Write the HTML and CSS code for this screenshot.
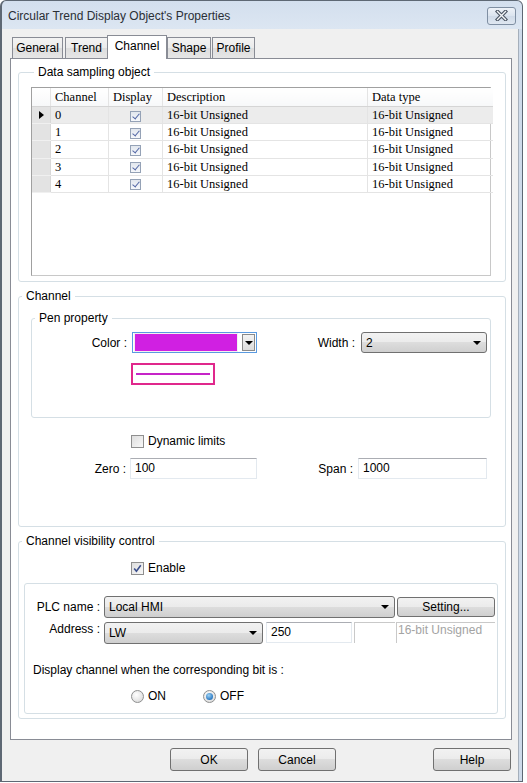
FILE: index.html
```html
<!DOCTYPE html>
<html lang="en">
<head>
    <meta charset="UTF-8">
    <meta name="viewport" content="width=device-width, initial-scale=1.0">
    <title>Circular Trend Display Object's Properties</title>
    <link rel="stylesheet" href="styles.css">
</head>
<body>
    <div class="window">
        <div class="titlebar">
            <span class="title">Circular Trend Display Object's Properties</span>
            <button class="close-btn" type="button">
                <svg width="13" height="11" viewBox="0 0 13 11">
                    <path d="M2.5 1.5 L10.5 9.5 M10.5 1.5 L2.5 9.5" stroke="#4b5563" stroke-width="3.6" stroke-linecap="square"/>
                    <path d="M2.5 1.5 L10.5 9.5 M10.5 1.5 L2.5 9.5" stroke="#f4f6f9" stroke-width="1.4" stroke-linecap="square"/>
                </svg>
            </button>
        </div>

        <div class="client">
            <div class="tabs">
                <div class="tab tab-general">General</div>
                <div class="tab tab-trend">Trend</div>
                <div class="tab tab-channel active">Channel</div>
                <div class="tab tab-shape">Shape</div>
                <div class="tab tab-profile">Profile</div>
            </div>

            <div class="panel">
                <fieldset class="group group-sampling">
                    <legend>Data sampling object</legend>
                    <div class="grid">
                        <table>
                            <thead>
                                <tr>
                                    <th class="rowhead"></th>
                                    <th class="col-channel">Channel</th>
                                    <th class="col-display">Display</th>
                                    <th class="col-desc">Description</th>
                                    <th class="col-type">Data type</th>
                                </tr>
                            </thead>
                            <tbody>
                                <tr class="selected">
                                    <td class="rowhead"><span class="pointer"></span></td>
                                    <td>0</td>
                                    <td class="center"><span class="cell-check"></span></td>
                                    <td>16-bit Unsigned</td>
                                    <td>16-bit Unsigned</td>
                                </tr>
                                <tr>
                                    <td class="rowhead"></td>
                                    <td>1</td>
                                    <td class="center"><span class="cell-check"></span></td>
                                    <td>16-bit Unsigned</td>
                                    <td>16-bit Unsigned</td>
                                </tr>
                                <tr>
                                    <td class="rowhead"></td>
                                    <td>2</td>
                                    <td class="center"><span class="cell-check"></span></td>
                                    <td>16-bit Unsigned</td>
                                    <td>16-bit Unsigned</td>
                                </tr>
                                <tr>
                                    <td class="rowhead"></td>
                                    <td>3</td>
                                    <td class="center"><span class="cell-check"></span></td>
                                    <td>16-bit Unsigned</td>
                                    <td>16-bit Unsigned</td>
                                </tr>
                                <tr>
                                    <td class="rowhead"></td>
                                    <td>4</td>
                                    <td class="center"><span class="cell-check"></span></td>
                                    <td>16-bit Unsigned</td>
                                    <td>16-bit Unsigned</td>
                                </tr>
                            </tbody>
                        </table>
                    </div>
                </fieldset>

                <fieldset class="group group-channel">
                    <legend>Channel</legend>
                    <fieldset class="group group-pen">
                        <legend>Pen property</legend>
                        <div class="row pen-row">
                            <span class="lbl lbl-color">Color :</span>
                            <div class="color-combo">
                                <span class="swatch"></span>
                                <span class="drop-btn"><span class="arrow"></span></span>
                            </div>
                            <span class="lbl lbl-width">Width :</span>
                            <div class="combo combo-width">
                                <span class="combo-text">2</span>
                                <span class="arrow"></span>
                            </div>
                        </div>
                        <div class="preview"><span class="preview-line"></span></div>
                    </fieldset>

                    <div class="check-row dyn-row">
                        <span class="chk"></span>
                        <span>Dynamic limits</span>
                    </div>

                    <div class="row limits-row">
                        <span class="lbl lbl-zero">Zero :</span>
                        <div class="textbox tb-zero">100</div>
                        <span class="lbl lbl-span">Span :</span>
                        <div class="textbox tb-span">1000</div>
                    </div>
                </fieldset>

                <fieldset class="group group-visibility">
                    <legend>Channel visibility control</legend>
                    <div class="check-row enable-row">
                        <span class="chk checked">
                            <svg width="9" height="9" viewBox="0 0 9 9"><path d="M1.2 4.6 L3.4 7.2 L7.8 1.2" fill="none" stroke="#3b4f8c" stroke-width="1.6"/></svg>
                        </span>
                        <span>Enable</span>
                    </div>

                    <div class="inner-box">
                        <div class="row plc-row">
                            <span class="lbl lbl-plc">PLC name :</span>
                            <div class="combo combo-plc">
                                <span class="combo-text">Local HMI</span>
                                <span class="arrow"></span>
                            </div>
                            <button class="btn btn-setting" type="button">Setting...</button>
                        </div>
                        <div class="row addr-row">
                            <span class="lbl lbl-plc">Address :</span>
                            <div class="combo combo-addr">
                                <span class="combo-text">LW</span>
                                <span class="arrow"></span>
                            </div>
                            <div class="textbox tb-addr">250</div>
                            <div class="stub"></div>
                            <div class="stub type-box">16-bit Unsigned</div>
                        </div>
                        <p class="bit-text">Display channel when the corresponding bit is :</p>
                        <div class="radio-row">
                            <span class="radio"></span>
                            <span class="radio-label">ON</span>
                            <span class="radio checked"><span class="dot"></span></span>
                            <span class="radio-label">OFF</span>
                        </div>
                    </div>
                </fieldset>
            </div>

            <div class="buttons">
                <button class="btn btn-ok" type="button">OK</button>
                <button class="btn btn-cancel" type="button">Cancel</button>
                <button class="btn btn-help" type="button">Help</button>
            </div>
        </div>
    </div>
</body>
</html>
```

FILE: styles.css
```css
body {
    margin: 0;
    background-color: #ffffff;
    font-family: "Liberation Sans", Arial, sans-serif;
    font-size: 12px;
    color: #000;
}

.window {
    width: 523px;
    height: 782px;
    box-sizing: border-box;
    border: 1px solid #5e6874;
    border-left-width: 2px;
    border-radius: 6px 6px 0 0;
    background: linear-gradient(#d3dfee, #dce6f2 28px, #cfdbea 28px);
    display: flex;
    flex-direction: column;
}

.titlebar {
    height: 28px;
    display: flex;
    align-items: center;
    justify-content: space-between;
    padding: 0 6px 0 6px;
}
.title {
    color: #2a2f36;
    font-size: 12px;
    margin-top: 1px;
}
.close-btn {
    width: 29px;
    height: 18px;
    margin-top: 1px;
    padding: 0;
    border: 1px solid #7f8fa3;
    border-radius: 3px;
    background: linear-gradient(#eef2f8, #dbe4ef 50%, #cfdae8 50%, #dfe7f1);
    display: flex;
    align-items: center;
    justify-content: center;
}

.client {
    flex: 1;
    background-color: #f0f0f0;
    margin-right: 3px;
    border-right: 1px solid #a5afbb;
    padding: 6px 0 0 8px;
}

/* tabs */
.tabs {
    display: flex;
    align-items: flex-end;
    height: 23px;
    padding-left: 2px;
}
.tab {
    height: 21px;
    box-sizing: border-box;
    border: 1px solid #898c95;
    border-bottom: none;
    background: linear-gradient(#f3f3f3, #ebebeb 50%, #dddddd 50%, #e6e6e6);
    text-align: center;
    line-height: 21px;
    color: #000;
}
.tab-general { width: 51px; margin-right: 2px; }
.tab-trend { width: 43px; }
.tab-shape { width: 44px; }
.tab-profile { width: 43px; margin-left: 1px; }
.tab.active {
    width: 60px;
    height: 24px;
    line-height: 20px;
    background: #ffffff;
    margin-bottom: -1px;
    margin-left: -1px;
    position: relative;
    z-index: 1;
}

.panel {
    width: 502px;
    height: 682px;
    box-sizing: border-box;
    border: 1px solid #898c95;
    background-color: #ffffff;
    padding: 0 5px 0 7px;
}

/* group boxes */
.group {
    margin: 0;
    padding: 0;
    min-width: 0;
    border: 1px solid #d5dfe5;
    border-radius: 3px;
}
.group legend {
    margin-left: 3px;
    padding: 0 4px;
    line-height: 14px;
    color: #000;
}

.group-sampling {
    margin-top: 6px;
    padding: 8px 0 5px 12px;
}
.grid {
    width: 460px;
    height: 189px;
    box-sizing: border-box;
    border: 1px solid #a0a0a0;
    border-right-color: #c8c8c8;
    border-bottom-color: #c8c8c8;
    background-color: #fff;
}
table {
    width: 457px;
    border-collapse: collapse;
    table-layout: fixed;
    font-family: "Liberation Serif", "Times New Roman", serif;
    font-size: 12.5px;
}
th, td {
    padding: 0 0 0 4px;
    text-align: left;
    font-weight: normal;
    white-space: nowrap;
    border-right: 1px solid #e4e4e4;
    border-bottom: 1px solid #e4e4e4;
}
th {
    height: 18px;
    background: linear-gradient(#ffffff, #f7f8f9);
    border-bottom-color: #d5d5d5;
}
td {
    height: 16.2px;
    line-height: 16px;
}
th.rowhead, td.rowhead {
    width: 18px;
    padding: 0;
}
td.rowhead {
    background-color: #e3e3e3;
    border-bottom-color: #f0f0f0;
    border-right-color: #d8d8d8;
}
.col-channel { width: 53px; }
.col-display { width: 49px; }
.col-desc { width: 200px; }
.col-type { width: 121px; border-right: none; }
td:last-child { border-right: none; }
tr.selected td { background-color: #ececec; }
tr.selected td.rowhead { background-color: #e3e3e3; }
td.center {
    text-align: center;
    padding: 0;
}
.pointer {
    display: block;
    width: 0;
    height: 0;
    margin-left: 7px;
    border-top: 4px solid transparent;
    border-bottom: 4px solid transparent;
    border-left: 5px solid #000;
}
.cell-check {
    display: inline-block;
    vertical-align: middle;
    width: 11px;
    height: 11px;
    box-sizing: border-box;
    border: 1px solid #95a2b6;
    background: linear-gradient(#e2e7ee, #f6f8fb);
    position: relative;
}
.cell-check::after {
    content: "";
    position: absolute;
    left: 3px;
    top: 0;
    width: 3px;
    height: 6px;
    border-right: 1.5px solid #5468a6;
    border-bottom: 1.5px solid #5468a6;
    transform: rotate(40deg);
}

/* channel group */
.group-channel {
    margin-top: 7px;
    padding: 8px 0 47px 0;
}
.group-pen {
    margin-left: 12px;
    width: 460px;
    box-sizing: border-box;
    padding: 7px 0 32px 0;
}
.row {
    display: flex;
    align-items: center;
}
.lbl {
    text-align: right;
    flex: none;
}
.lbl-color { width: 95px; margin-right: 5px; }
.lbl-width { width: 98px; margin-right: 6px; }
.pen-row { height: 21px; }

.color-combo {
    width: 125px;
    height: 21px;
    box-sizing: border-box;
    border: 1px solid #5a9ae0;
    display: flex;
    align-items: center;
    padding: 1px;
    background: #fff;
}
.swatch {
    width: 102px;
    height: 17px;
    background-color: #d020e2;
    border: 1px solid #f2f2f2;
}
.drop-btn {
    width: 13px;
    height: 17px;
    margin-left: 4px;
    box-sizing: border-box;
    border: 1px solid #8a8a8a;
    background: linear-gradient(#f4f4f4, #dcdcdc);
    display: flex;
    align-items: center;
    justify-content: center;
}
.arrow {
    width: 0;
    height: 0;
    border-left: 4px solid transparent;
    border-right: 4px solid transparent;
    border-top: 4px solid #000;
}

.combo {
    height: 22px;
    box-sizing: border-box;
    border: 1px solid #707070;
    border-radius: 3px;
    background: linear-gradient(#f2f2f2, #ebebeb 50%, #dddddd 50%, #cfcfcf);
    display: flex;
    align-items: center;
    justify-content: space-between;
    padding: 0 5px 0 4px;
}
.combo-width { width: 126px; height: 21px; }
.combo-text { line-height: 14px; }

.preview {
    width: 84px;
    height: 22px;
    box-sizing: border-box;
    margin: 10px 0 0 99px;
    border: 2px solid #e0288c;
    padding: 0 3px;
    display: flex;
    align-items: center;
}
.preview-line {
    flex: 1;
    height: 2px;
    background-color: #c624c8;
}

.check-row {
    display: flex;
    align-items: center;
    height: 14px;
    margin-left: 112px;
}
.chk {
    width: 13px;
    height: 13px;
    box-sizing: border-box;
    border: 1px solid #8f8f8f;
    background: linear-gradient(135deg, #dedede, #f8f8f8);
    margin-right: 4px;
    display: flex;
    align-items: center;
    justify-content: center;
}
.dyn-row { margin-top: 16px; }
.enable-row { margin-top: 13px; }

.limits-row { margin-top: 10px; }
.lbl-zero { width: 107px; margin-right: 4px; }
.lbl-span { width: 96px; margin-right: 5px; }
.textbox {
    height: 21px;
    box-sizing: border-box;
    border: 1px solid #e3e9ef;
    border-top-color: #abadb3;
    background: #fff;
    padding-left: 4px;
    line-height: 19px;
}
.tb-zero { width: 127px; }
.tb-span { width: 129px; }

/* visibility group */
.group-visibility {
    margin-top: 7px;
    padding: 0 0 4px 0;
}
.inner-box {
    margin: 8px 0 0 5px;
    width: 474px;
    box-sizing: border-box;
    border: 1px solid #d5dfe5;
    border-radius: 3px;
    padding: 12px 0 10px 0;
}
.lbl-plc { width: 75px; margin-right: 4px; }
.combo-plc { width: 291px; }
.btn {
    height: 20px;
    box-sizing: border-box;
    border: 1px solid #707070;
    border-radius: 3px;
    background: linear-gradient(#f2f2f2, #ebebeb 50%, #dddddd 50%, #cfcfcf);
    font-family: "Liberation Sans", Arial, sans-serif;
    font-size: 12px;
    color: #000;
    padding: 0;
}
.btn-setting {
    width: 98px;
    margin-left: 2px;
}
.addr-row { margin-top: 4px; align-items: flex-start; }
.combo-addr { width: 159px; }
.tb-addr {
    width: 86px;
    margin-left: 3px;
}
.stub {
    width: 41px;
    height: 21px;
    box-sizing: border-box;
    margin-left: 2px;
    border-left: 1px solid #c9c9c9;
    border-top: 1px solid #c9c9c9;
}
.type-box {
    width: 99px;
    margin-left: 1px;
    color: #a3a3a3;
    padding-left: 1px;
    line-height: 15px;
}
.bit-text {
    margin: 19px 0 0 8px;
    line-height: 14px;
}
.radio-row {
    display: flex;
    align-items: center;
    height: 14px;
    margin: 12px 0 0 106px;
}
.radio {
    width: 13px;
    height: 13px;
    box-sizing: border-box;
    border: 1px solid #8e8f8f;
    border-radius: 50%;
    background: radial-gradient(circle at 40% 35%, #ffffff, #d4d4d4);
    display: flex;
    align-items: center;
    justify-content: center;
}
.radio-label { margin-left: 4px; }
.radio-label:nth-child(2) { width: 55px; }
.dot {
    width: 7px;
    height: 7px;
    border-radius: 50%;
    background: radial-gradient(circle at 40% 35%, #9fd3f5, #2b79c2 70%, #1f5a9c);
}

/* bottom buttons */
.buttons {
    display: flex;
    margin-top: 8px;
    padding-left: 160px;
}
.buttons .btn {
    width: 78px;
    height: 23px;
}
.btn-cancel { margin-left: 10px; }
.btn-help { margin-left: 97px; }
```
